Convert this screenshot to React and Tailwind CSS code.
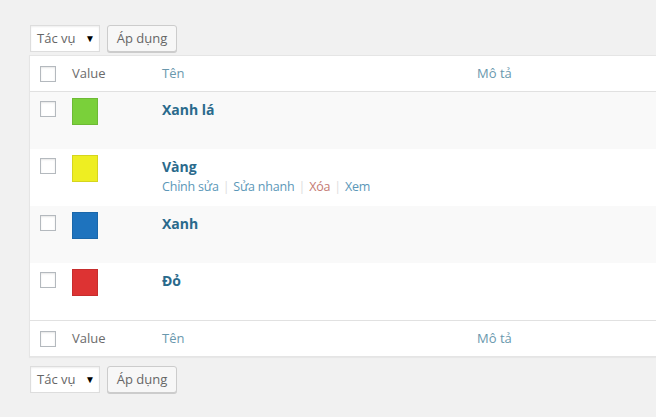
import React from 'react';

const rows = [
  { name: 'Xanh lá', color: '#7ad03a', bg: 'bg-[#f9f9f9]' },
  { name: 'Vàng', color: '#eeee22', bg: 'bg-white', actions: true },
  { name: 'Xanh', color: '#1e73be', bg: 'bg-[#f9f9f9]' },
  { name: 'Đỏ', color: '#dd3333', bg: 'bg-white' },
];

const Checkbox = () => (
  <div className="w-[16px] h-[16px] border border-[#b4b9be] bg-white shadow-[inset_0_1px_2px_rgba(0,0,0,0.1)]" />
);

const BulkActions = () => (
  <div className="flex items-center gap-[7px] pl-[30px]">
    <div className="w-[70px] h-[27px] flex items-center justify-between pl-[6px] pr-[4px] bg-white border border-[#ddd] shadow-[inset_0_1px_2px_rgba(0,0,0,0.07)] text-[13px] text-[#666]">
      <span>Tác vụ</span>
      <span className="text-[10px] text-black">▼</span>
    </div>
    <div className="w-[70px] h-[27px] flex items-center justify-center bg-[#f7f7f7] border border-[#ccc] rounded-[3px] shadow-[0_1px_0_#ccc] text-[13px] text-[#666]">
      Áp dụng
    </div>
  </div>
);

const HeadRow = ({ top }) => (
  <div
    className={`grid grid-cols-[42px_90px_315px_1fr] items-center h-[36px] text-[13px] ${
      top ? 'border-b border-[#e1e1e1]' : 'border-t border-[#e1e1e1]'
    }`}
  >
    <div className="pl-[10px]">
      <Checkbox />
    </div>
    <div className="text-[#6b6b6b]">Value</div>
    <div className="text-[#6a98ad]">Tên</div>
    <div className="text-[#6a98ad]">Mô tả</div>
  </div>
);

export default function App() {
  return (
    <div
      className="w-[656px] h-[417px] bg-[#f1f1f1] pt-[25px] overflow-hidden"
      style={{ fontFamily: '"Open Sans", "Noto Sans", sans-serif' }}
    >
      <BulkActions />
      <div className="ml-[29px] mt-[3px] bg-white border border-r-0 border-[#e5e5e5] shadow-[0_1px_1px_rgba(0,0,0,0.04)]">
        <HeadRow top />
        {rows.map((r) => (
          <div key={r.name} className={`grid grid-cols-[42px_90px_315px_1fr] h-[57px] ${r.bg}`}>
            <div className="pl-[10px] pt-[9px]">
              <Checkbox />
            </div>
            <div className="pt-[6px]">
              <div
                className="w-[26px] h-[27px] border border-black/10"
                style={{ backgroundColor: r.color }}
              />
            </div>
            <div className="pt-[8px]">
              <div className="text-[14px] font-bold leading-[20px] text-[#2a6a8c]">{r.name}</div>
              {r.actions && (
                <div className="text-[12.5px] leading-[20px] text-[#5b97b8] flex items-center tracking-[-0.2px]">
                  <span>Chỉnh sửa</span>
                  <span className="text-[#ddd] px-[4px]">|</span>
                  <span>Sửa nhanh</span>
                  <span className="text-[#ddd] px-[4px]">|</span>
                  <span className="text-[#c47a72]">Xóa</span>
                  <span className="text-[#ddd] px-[4px]">|</span>
                  <span>Xem</span>
                </div>
              )}
            </div>
            <div />
          </div>
        ))}
        <HeadRow />
      </div>
      <div className="mt-[9px]">
        <BulkActions />
      </div>
    </div>
  );
}
